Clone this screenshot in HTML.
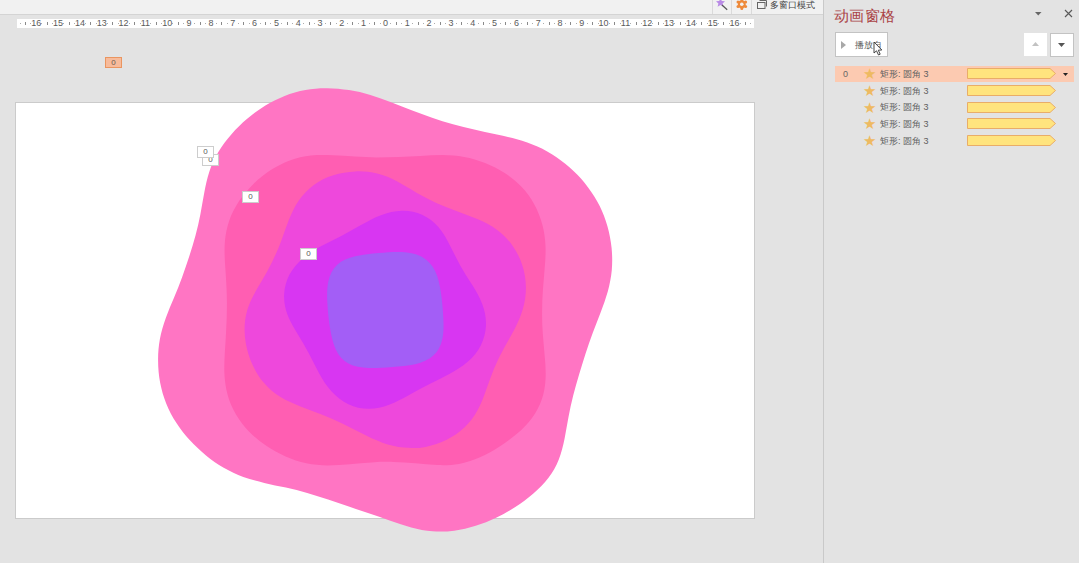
<!DOCTYPE html>
<html><head><meta charset="utf-8">
<style>
*{margin:0;padding:0;box-sizing:border-box}
html,body{width:1079px;height:563px;overflow:hidden;background:#e3e3e3;font-family:"Liberation Sans",sans-serif;position:relative}
.abs{position:absolute}
#topbar{left:0;top:0;width:823px;height:15px;background:#f1f1f1;border-bottom:1px solid #d4d4d4}
.sep{position:absolute;top:0;width:1px;height:14px;background:#dadada}
#ruler{left:17px;top:19px;width:737px;height:9px;background:#fff}
.rn{position:absolute;top:-1px;font-size:9px;line-height:11px;color:#5a5a5a;transform:translateX(-50%)}
.tk{position:absolute;background:#8a8a8a}
#slide{left:15px;top:102px;width:740px;height:417px;background:#fff;border:1px solid #cbcbcb}
.lbl{position:absolute;width:17px;height:12px;background:#fff;border:1px solid #cdcdcd;font-size:8px;line-height:10px;text-align:center;color:#5a5a5a}
#panelsep{left:823px;top:0;width:1px;height:563px;background:#c9c9c9}
#title{left:834px;top:6px;font-size:15px;line-height:20px;color:#aa4245;letter-spacing:0.4px}
.btn{position:absolute;background:#fff;border:1px solid #c3c3c3}
.row{position:absolute;left:835px;width:239px;height:16px}
.rtxt{position:absolute;left:45px;top:0.8px;font-size:9px;line-height:14px;color:#606060}
.star{position:absolute;left:28px;top:0px;font-size:15px;line-height:16px;color:#eeba62}
.bar{position:absolute;left:132px;top:2px;width:89px;height:11px}
</style></head><body>
<div id="topbar" class="abs">
  <div class="sep" style="left:712px"></div>
  <div class="sep" style="left:731px"></div>
  <div class="sep" style="left:751px"></div>
  <svg class="abs" style="left:712px;top:0" width="20" height="14" viewBox="0 0 20 14">
    <polygon points="8.5,-2.5 9.8,1 13,1.2 10.6,3.4 11.4,6.8 8.5,5 5.6,6.8 6.4,3.4 4,1.2 7.2,1" fill="#b98be6"/>
    <line x1="10" y1="5" x2="15.2" y2="9.8" stroke="#555" stroke-width="1.2"/>
  </svg>
  <svg class="abs" style="left:732px;top:0" width="19" height="14" viewBox="0 0 19 14">
    <g fill="#ee8a3a"><circle cx="9.8" cy="4.2" r="3.9"/><circle cx="9.8" cy="-0.2" r="1.5"/><circle cx="9.8" cy="8.6" r="1.5"/><circle cx="6" cy="2" r="1.5"/><circle cx="13.6" cy="2" r="1.5"/><circle cx="6" cy="6.4" r="1.5"/><circle cx="13.6" cy="6.4" r="1.5"/></g>
    <circle cx="9.8" cy="4.2" r="1.8" fill="#f1f1f1"/>
  </svg>
  <svg class="abs" style="left:756px;top:0" width="12" height="12" viewBox="0 0 12 12">
    <rect x="1.5" y="2.5" width="7.5" height="6" fill="#f1f1f1" stroke="#666" stroke-width="1"/>
    <path d="M3.5,0.5 H10.5 V6.5" fill="none" stroke="#666" stroke-width="1"/>
  </svg>
  <div class="abs" style="left:770px;top:0px;font-size:8.8px;line-height:11px;color:#444">多窗口模式</div>
</div>
<div id="ruler" class="abs"><div class="rn" style="left:19.3px">16</div><div class="rn" style="left:41.1px">15</div><div class="rn" style="left:63.0px">14</div><div class="rn" style="left:84.8px">13</div><div class="rn" style="left:106.6px">12</div><div class="rn" style="left:128.4px">11</div><div class="rn" style="left:150.2px">10</div><div class="rn" style="left:172.1px">9</div><div class="rn" style="left:193.9px">8</div><div class="rn" style="left:215.7px">7</div><div class="rn" style="left:237.5px">6</div><div class="rn" style="left:259.4px">5</div><div class="rn" style="left:281.2px">4</div><div class="rn" style="left:303.0px">3</div><div class="rn" style="left:324.8px">2</div><div class="rn" style="left:346.6px">1</div><div class="rn" style="left:368.4px">0</div><div class="rn" style="left:390.3px">1</div><div class="rn" style="left:412.1px">2</div><div class="rn" style="left:433.9px">3</div><div class="rn" style="left:455.7px">4</div><div class="rn" style="left:477.5px">5</div><div class="rn" style="left:499.4px">6</div><div class="rn" style="left:521.2px">7</div><div class="rn" style="left:543.0px">8</div><div class="rn" style="left:564.8px">9</div><div class="rn" style="left:586.6px">10</div><div class="rn" style="left:608.5px">11</div><div class="rn" style="left:630.3px">12</div><div class="rn" style="left:652.1px">13</div><div class="rn" style="left:673.9px">14</div><div class="rn" style="left:695.8px">15</div><div class="rn" style="left:717.6px">16</div><div class="tk" style="left:2.5px;top:4px;width:1px;height:1px;opacity:.7"></div><div class="tk" style="left:7.9px;top:3px;width:1px;height:3px"></div><div class="tk" style="left:13.4px;top:4px;width:1px;height:1px;opacity:.7"></div><div class="tk" style="left:24.3px;top:4px;width:1px;height:1px;opacity:.7"></div><div class="tk" style="left:29.7px;top:3px;width:1px;height:3px"></div><div class="tk" style="left:35.2px;top:4px;width:1px;height:1px;opacity:.7"></div><div class="tk" style="left:46.1px;top:4px;width:1px;height:1px;opacity:.7"></div><div class="tk" style="left:51.6px;top:3px;width:1px;height:3px"></div><div class="tk" style="left:57.0px;top:4px;width:1px;height:1px;opacity:.7"></div><div class="tk" style="left:67.9px;top:4px;width:1px;height:1px;opacity:.7"></div><div class="tk" style="left:73.4px;top:3px;width:1px;height:3px"></div><div class="tk" style="left:78.8px;top:4px;width:1px;height:1px;opacity:.7"></div><div class="tk" style="left:89.7px;top:4px;width:1px;height:1px;opacity:.7"></div><div class="tk" style="left:95.2px;top:3px;width:1px;height:3px"></div><div class="tk" style="left:100.7px;top:4px;width:1px;height:1px;opacity:.7"></div><div class="tk" style="left:111.6px;top:4px;width:1px;height:1px;opacity:.7"></div><div class="tk" style="left:117.0px;top:3px;width:1px;height:3px"></div><div class="tk" style="left:122.5px;top:4px;width:1px;height:1px;opacity:.7"></div><div class="tk" style="left:133.4px;top:4px;width:1px;height:1px;opacity:.7"></div><div class="tk" style="left:138.8px;top:3px;width:1px;height:3px"></div><div class="tk" style="left:144.3px;top:4px;width:1px;height:1px;opacity:.7"></div><div class="tk" style="left:155.2px;top:4px;width:1px;height:1px;opacity:.7"></div><div class="tk" style="left:160.7px;top:3px;width:1px;height:3px"></div><div class="tk" style="left:166.1px;top:4px;width:1px;height:1px;opacity:.7"></div><div class="tk" style="left:177.0px;top:4px;width:1px;height:1px;opacity:.7"></div><div class="tk" style="left:182.5px;top:3px;width:1px;height:3px"></div><div class="tk" style="left:187.9px;top:4px;width:1px;height:1px;opacity:.7"></div><div class="tk" style="left:198.8px;top:4px;width:1px;height:1px;opacity:.7"></div><div class="tk" style="left:204.3px;top:3px;width:1px;height:3px"></div><div class="tk" style="left:209.8px;top:4px;width:1px;height:1px;opacity:.7"></div><div class="tk" style="left:220.7px;top:4px;width:1px;height:1px;opacity:.7"></div><div class="tk" style="left:226.1px;top:3px;width:1px;height:3px"></div><div class="tk" style="left:231.6px;top:4px;width:1px;height:1px;opacity:.7"></div><div class="tk" style="left:242.5px;top:4px;width:1px;height:1px;opacity:.7"></div><div class="tk" style="left:247.9px;top:3px;width:1px;height:3px"></div><div class="tk" style="left:253.4px;top:4px;width:1px;height:1px;opacity:.7"></div><div class="tk" style="left:264.3px;top:4px;width:1px;height:1px;opacity:.7"></div><div class="tk" style="left:269.8px;top:3px;width:1px;height:3px"></div><div class="tk" style="left:275.2px;top:4px;width:1px;height:1px;opacity:.7"></div><div class="tk" style="left:286.1px;top:4px;width:1px;height:1px;opacity:.7"></div><div class="tk" style="left:291.6px;top:3px;width:1px;height:3px"></div><div class="tk" style="left:297.0px;top:4px;width:1px;height:1px;opacity:.7"></div><div class="tk" style="left:307.9px;top:4px;width:1px;height:1px;opacity:.7"></div><div class="tk" style="left:313.4px;top:3px;width:1px;height:3px"></div><div class="tk" style="left:318.9px;top:4px;width:1px;height:1px;opacity:.7"></div><div class="tk" style="left:329.8px;top:4px;width:1px;height:1px;opacity:.7"></div><div class="tk" style="left:335.2px;top:3px;width:1px;height:3px"></div><div class="tk" style="left:340.7px;top:4px;width:1px;height:1px;opacity:.7"></div><div class="tk" style="left:351.6px;top:4px;width:1px;height:1px;opacity:.7"></div><div class="tk" style="left:357.0px;top:3px;width:1px;height:3px"></div><div class="tk" style="left:362.5px;top:4px;width:1px;height:1px;opacity:.7"></div><div class="tk" style="left:373.4px;top:4px;width:1px;height:1px;opacity:.7"></div><div class="tk" style="left:378.9px;top:3px;width:1px;height:3px"></div><div class="tk" style="left:384.3px;top:4px;width:1px;height:1px;opacity:.7"></div><div class="tk" style="left:395.2px;top:4px;width:1px;height:1px;opacity:.7"></div><div class="tk" style="left:400.7px;top:3px;width:1px;height:3px"></div><div class="tk" style="left:406.1px;top:4px;width:1px;height:1px;opacity:.7"></div><div class="tk" style="left:417.0px;top:4px;width:1px;height:1px;opacity:.7"></div><div class="tk" style="left:422.5px;top:3px;width:1px;height:3px"></div><div class="tk" style="left:428.0px;top:4px;width:1px;height:1px;opacity:.7"></div><div class="tk" style="left:438.9px;top:4px;width:1px;height:1px;opacity:.7"></div><div class="tk" style="left:444.3px;top:3px;width:1px;height:3px"></div><div class="tk" style="left:449.8px;top:4px;width:1px;height:1px;opacity:.7"></div><div class="tk" style="left:460.7px;top:4px;width:1px;height:1px;opacity:.7"></div><div class="tk" style="left:466.1px;top:3px;width:1px;height:3px"></div><div class="tk" style="left:471.6px;top:4px;width:1px;height:1px;opacity:.7"></div><div class="tk" style="left:482.5px;top:4px;width:1px;height:1px;opacity:.7"></div><div class="tk" style="left:488.0px;top:3px;width:1px;height:3px"></div><div class="tk" style="left:493.4px;top:4px;width:1px;height:1px;opacity:.7"></div><div class="tk" style="left:504.3px;top:4px;width:1px;height:1px;opacity:.7"></div><div class="tk" style="left:509.8px;top:3px;width:1px;height:3px"></div><div class="tk" style="left:515.2px;top:4px;width:1px;height:1px;opacity:.7"></div><div class="tk" style="left:526.1px;top:4px;width:1px;height:1px;opacity:.7"></div><div class="tk" style="left:531.6px;top:3px;width:1px;height:3px"></div><div class="tk" style="left:537.1px;top:4px;width:1px;height:1px;opacity:.7"></div><div class="tk" style="left:548.0px;top:4px;width:1px;height:1px;opacity:.7"></div><div class="tk" style="left:553.4px;top:3px;width:1px;height:3px"></div><div class="tk" style="left:558.9px;top:4px;width:1px;height:1px;opacity:.7"></div><div class="tk" style="left:569.8px;top:4px;width:1px;height:1px;opacity:.7"></div><div class="tk" style="left:575.2px;top:3px;width:1px;height:3px"></div><div class="tk" style="left:580.7px;top:4px;width:1px;height:1px;opacity:.7"></div><div class="tk" style="left:591.6px;top:4px;width:1px;height:1px;opacity:.7"></div><div class="tk" style="left:597.1px;top:3px;width:1px;height:3px"></div><div class="tk" style="left:602.5px;top:4px;width:1px;height:1px;opacity:.7"></div><div class="tk" style="left:613.4px;top:4px;width:1px;height:1px;opacity:.7"></div><div class="tk" style="left:618.9px;top:3px;width:1px;height:3px"></div><div class="tk" style="left:624.3px;top:4px;width:1px;height:1px;opacity:.7"></div><div class="tk" style="left:635.2px;top:4px;width:1px;height:1px;opacity:.7"></div><div class="tk" style="left:640.7px;top:3px;width:1px;height:3px"></div><div class="tk" style="left:646.2px;top:4px;width:1px;height:1px;opacity:.7"></div><div class="tk" style="left:657.1px;top:4px;width:1px;height:1px;opacity:.7"></div><div class="tk" style="left:662.5px;top:3px;width:1px;height:3px"></div><div class="tk" style="left:668.0px;top:4px;width:1px;height:1px;opacity:.7"></div><div class="tk" style="left:678.9px;top:4px;width:1px;height:1px;opacity:.7"></div><div class="tk" style="left:684.3px;top:3px;width:1px;height:3px"></div><div class="tk" style="left:689.8px;top:4px;width:1px;height:1px;opacity:.7"></div><div class="tk" style="left:700.7px;top:4px;width:1px;height:1px;opacity:.7"></div><div class="tk" style="left:706.2px;top:3px;width:1px;height:3px"></div><div class="tk" style="left:711.6px;top:4px;width:1px;height:1px;opacity:.7"></div><div class="tk" style="left:722.5px;top:4px;width:1px;height:1px;opacity:.7"></div><div class="tk" style="left:728.0px;top:3px;width:1px;height:3px"></div><div class="tk" style="left:733.4px;top:4px;width:1px;height:1px;opacity:.7"></div></div>
<div class="abs" style="left:105px;top:57px;width:17px;height:11px;background:#f7bb9b;border:1px solid #ea9560;font-size:8px;line-height:9px;text-align:center;color:#6a5a50">0</div>
<div id="slide" class="abs"></div>
<svg class="abs" style="left:0;top:0" width="1079" height="563">
  <path d="M174.1,297.6C176.9,290.8 179.6,284.0 182.1,277.2C184.6,270.3 187.0,263.4 189.2,256.5C191.5,249.6 193.6,242.6 195.5,235.6C197.4,228.5 199.0,221.4 200.4,214.3C201.8,207.1 202.9,199.8 204.3,192.6C205.6,185.4 207.1,178.2 209.4,171.4C211.7,164.5 214.7,157.9 218.5,151.7C222.2,145.5 226.6,139.7 231.5,134.2C236.3,128.7 241.6,123.5 247.2,118.8C252.8,114.0 258.7,109.7 265.0,105.8C271.2,101.9 277.8,98.6 284.6,95.9C291.3,93.2 298.3,91.2 305.5,89.9C312.6,88.7 319.9,88.1 327.1,88.2C334.4,88.3 341.8,89.0 349.0,90.1C356.3,91.3 363.4,92.9 370.4,95.0C377.4,97.1 384.3,99.7 391.1,102.3C397.9,104.9 404.7,107.5 411.6,110.2C418.4,112.8 425.2,115.3 432.1,117.7C439.0,120.1 445.9,122.2 453.0,124.2C460.0,126.2 467.1,127.9 474.2,129.6C481.3,131.3 488.5,132.8 495.7,134.3C502.8,135.8 510.0,137.2 516.9,139.2C523.9,141.1 530.8,143.6 537.4,146.6C544.1,149.6 550.5,153.2 556.5,157.3C562.5,161.4 568.2,166.0 573.5,171.1C578.8,176.1 583.8,181.6 588.1,187.5C592.5,193.4 596.4,199.6 599.7,206.1C602.9,212.7 605.5,219.5 607.5,226.5C609.5,233.6 610.8,240.8 611.6,248.0C612.3,255.3 612.4,262.7 611.8,269.9C611.1,277.2 609.7,284.4 607.8,291.4C605.8,298.5 603.3,305.4 600.7,312.2C598.1,319.1 595.4,325.9 592.8,332.7C590.3,339.6 587.9,346.4 585.6,353.4C583.4,360.3 581.2,367.3 579.1,374.4C577.0,381.4 575.0,388.4 573.2,395.5C571.4,402.6 569.8,409.7 568.5,416.9C567.1,424.1 566.0,431.3 564.6,438.4C563.1,445.6 561.4,452.7 558.8,459.4C556.2,466.0 552.6,472.3 548.3,478.0C543.9,483.7 538.7,488.9 533.1,493.8C527.5,498.6 521.5,503.0 515.3,507.0C509.1,511.0 502.7,514.6 496.1,517.7C489.5,520.9 482.6,523.6 475.7,525.8C468.7,528.1 461.5,529.8 454.3,530.7C447.1,531.6 439.8,531.8 432.6,531.3C425.4,530.7 418.2,529.4 411.2,527.5C404.2,525.6 397.3,523.2 390.3,520.8C383.4,518.4 376.5,516.0 369.5,513.6C362.6,511.3 355.7,509.0 348.8,506.6C341.9,504.3 335.0,501.9 328.1,499.6C321.2,497.3 314.2,495.0 307.2,493.0C300.2,491.0 293.1,489.3 285.9,487.6C278.7,486.0 271.5,484.6 264.3,482.9C257.2,481.2 250.1,479.3 243.3,476.9C236.5,474.4 230.0,471.3 223.7,467.7C217.4,464.1 211.4,459.9 205.7,455.2C200.0,450.6 194.7,445.5 189.7,440.1C184.8,434.6 180.2,428.9 176.3,422.8C172.3,416.7 168.9,410.3 166.2,403.5C163.5,396.8 161.5,389.8 160.1,382.6C158.8,375.4 158.1,368.0 158.1,360.7C158.0,353.3 158.6,346.0 159.9,338.9C161.2,331.8 163.3,324.8 165.8,317.9C168.3,311.1 171.3,304.3 174.1,297.6Z" fill="#ff75c3"/>
  <path d="M226.4,285.4C226.1,278.1 225.5,270.7 225.0,263.4C224.6,256.0 224.3,248.7 224.9,241.5C225.5,234.3 226.9,227.2 229.3,220.4C231.7,213.6 235.1,207.2 239.1,201.1C243.2,195.1 248.0,189.4 253.2,184.2C258.5,179.1 264.2,174.4 270.4,170.3C276.5,166.3 283.0,162.9 289.8,160.4C296.6,157.9 303.7,156.3 310.9,155.5C318.1,154.8 325.4,154.9 332.7,155.2C340.0,155.5 347.4,156.1 354.7,156.6C362.0,157.0 369.3,157.3 376.6,157.4C383.9,157.4 391.2,157.3 398.5,157.1C405.9,156.8 413.2,156.4 420.5,156.0C427.8,155.5 435.1,155.1 442.4,155.1C449.7,155.2 457.0,155.7 464.1,156.9C471.3,158.2 478.3,160.3 485.1,163.0C491.9,165.7 498.6,169.1 504.7,173.0C510.9,177.0 516.6,181.5 521.5,186.8C526.5,192.0 530.8,197.9 534.2,204.3C537.7,210.7 540.4,217.5 542.3,224.6C544.2,231.6 545.2,238.9 545.5,246.2C545.8,253.5 545.3,260.8 544.7,268.1C544.2,275.5 543.4,282.8 542.9,290.1C542.4,297.3 542.1,304.6 542.1,311.9C542.0,319.2 542.3,326.5 542.8,333.8C543.3,341.2 544.1,348.5 544.7,355.9C545.4,363.3 545.9,370.7 545.6,377.9C545.3,385.2 544.2,392.3 541.9,399.0C539.7,405.7 536.3,412.0 532.0,417.9C527.7,423.7 522.6,429.0 516.9,433.8C511.3,438.6 505.2,442.9 498.9,446.9C492.6,450.9 486.1,454.5 479.4,457.5C472.8,460.4 465.9,462.7 458.9,463.9C451.9,465.2 444.7,465.4 437.4,465.1C430.1,464.8 422.7,463.9 415.4,463.2C408.0,462.6 400.7,462.1 393.4,461.9C386.1,461.8 378.8,461.9 371.6,462.4C364.3,462.8 357.0,463.6 349.7,464.2C342.4,464.8 335.1,465.4 327.8,465.4C320.5,465.3 313.3,464.7 306.3,463.2C299.2,461.7 292.3,459.4 285.6,456.4C278.9,453.4 272.4,449.8 266.3,445.7C260.1,441.6 254.4,436.9 249.2,431.7C244.1,426.5 239.7,420.7 236.0,414.5C232.4,408.3 229.5,401.6 227.6,394.7C225.7,387.8 224.7,380.6 224.4,373.3C224.1,366.0 224.5,358.7 224.9,351.3C225.4,343.9 225.9,336.6 226.2,329.3C226.6,321.9 226.9,314.6 226.9,307.3C227.0,300.0 226.8,292.7 226.4,285.4Z" fill="#ff5eb2"/>
  <path d="M250.9,300.6C253.8,294.0 257.7,287.7 261.5,281.3C265.3,274.9 268.9,268.4 272.2,261.7C275.5,255.0 278.5,248.2 281.1,241.2C283.7,234.2 286.1,227.1 288.8,220.1C291.6,213.2 294.7,206.6 298.8,200.6C302.9,194.6 307.9,189.3 313.8,185.0C319.6,180.7 326.2,177.4 333.3,175.2C340.3,172.9 347.8,171.7 355.3,171.4C362.7,171.1 370.1,171.7 377.2,173.5C384.2,175.2 390.9,178.1 397.3,181.5C403.8,184.9 410.1,189.0 416.5,192.7C422.9,196.4 429.5,199.9 436.3,203.0C443.1,206.0 450.0,208.7 457.0,211.3C464.1,213.9 471.1,216.4 477.9,219.3C484.8,222.2 491.3,225.6 497.2,229.9C503.0,234.2 508.2,239.4 512.4,245.4C516.7,251.4 520.0,258.1 522.3,265.2C524.6,272.2 525.8,279.6 525.9,287.0C526.0,294.3 525.0,301.6 523.0,308.6C521.0,315.7 518.0,322.4 514.6,329.0C511.2,335.6 507.3,342.1 503.8,348.6C500.2,355.2 496.9,361.9 494.0,368.8C491.2,375.7 488.7,382.8 486.2,389.8C483.7,396.8 481.1,403.8 477.7,410.1C474.2,416.5 469.9,422.3 464.7,427.3C459.4,432.3 453.3,436.5 446.7,439.8C440.1,443.1 433.0,445.5 425.7,446.9C418.5,448.2 411.1,448.4 403.8,447.6C396.6,446.9 389.4,445.1 382.4,442.7C375.5,440.2 368.8,437.0 362.1,433.6C355.5,430.3 348.9,426.8 342.2,423.5C335.4,420.2 328.5,417.3 321.6,414.5C314.6,411.8 307.4,409.3 300.5,406.5C293.5,403.8 286.7,400.9 280.5,397.1C274.3,393.3 268.8,388.6 264.1,383.1C259.4,377.6 255.4,371.3 252.4,364.5C249.3,357.8 247.1,350.5 245.8,343.2C244.5,335.8 244.2,328.4 245.0,321.2C245.9,314.1 247.9,307.2 250.9,300.6Z" fill="#ee48dc"/>
  <path d="M284.1,294.6C284.4,287.7 286.3,280.8 289.5,274.6C292.8,268.4 297.4,262.9 303.0,258.2C308.5,253.5 314.9,249.7 321.4,246.1C328.0,242.6 334.7,239.3 341.3,235.9C347.9,232.4 354.4,228.7 361.0,225.1C367.5,221.4 374.1,217.8 380.9,215.2C387.7,212.5 394.8,210.9 401.8,210.7C408.9,210.5 415.9,211.9 422.1,214.7C428.4,217.6 434.0,221.9 438.6,227.3C443.2,232.8 446.8,239.2 450.2,245.9C453.6,252.5 456.9,259.4 460.5,265.9C464.2,272.5 468.3,278.7 472.3,285.1C476.2,291.4 480.0,297.8 482.4,304.5C484.9,311.3 486.2,318.3 486.0,325.3C485.7,332.3 484.0,339.2 480.8,345.4C477.7,351.6 473.1,357.1 467.7,361.8C462.2,366.5 455.9,370.4 449.3,374.0C442.7,377.6 435.9,380.8 429.1,384.2C422.4,387.7 415.7,391.3 409.1,394.9C402.5,398.5 395.8,402.1 389.1,404.7C382.3,407.3 375.3,408.9 368.4,408.8C361.5,408.8 354.7,407.2 348.4,404.2C342.2,401.2 336.5,396.7 331.6,391.4C326.7,386.1 322.7,379.9 319.2,373.4C315.6,366.8 312.4,360.0 308.9,353.5C305.4,346.9 301.6,340.5 297.8,334.2C294.0,327.9 290.2,321.7 287.6,315.1C285.1,308.5 283.8,301.5 284.1,294.6Z" fill="#d836f2"/>
  <path d="M327.4,304.0C326.9,296.0 326.9,288.3 328.3,281.5C329.7,274.7 332.6,268.9 337.2,264.7C341.8,260.6 348.1,258.0 355.2,256.3C362.4,254.7 370.4,253.9 378.5,253.1C386.5,252.4 394.6,251.7 402.1,252.1C409.6,252.5 416.5,254.0 422.2,257.1C427.8,260.3 432.2,265.1 435.2,271.3C438.2,277.4 439.7,284.7 440.9,292.5C442.0,300.2 442.8,308.4 443.2,316.3C443.7,324.2 443.8,331.9 442.4,338.7C441.0,345.5 438.0,351.3 433.3,355.6C428.7,359.9 422.4,362.5 415.2,364.2C408.1,365.8 400.1,366.4 392.1,367.0C384.0,367.6 375.9,368.3 368.4,368.0C361.0,367.7 354.1,366.5 348.5,363.5C342.9,360.5 338.7,355.7 335.8,349.5C332.9,343.3 331.3,335.9 330.0,328.1C328.7,320.2 327.9,312.0 327.4,304.0Z" fill="#a35ef6"/>
</svg>
<div class="lbl" style="left:202px;top:154px">0</div>
<div class="lbl" style="left:197px;top:146px">0</div>
<div class="lbl" style="left:242px;top:191px">0</div>
<div class="lbl" style="left:300px;top:248px">0</div>
<div id="panelsep" class="abs"></div>
<div id="title" class="abs">动画窗格</div>
<svg class="abs" style="left:1034.5px;top:11.5px" width="8" height="5"><polygon points="0,0 6.5,0 3.25,3.5" fill="#666"/></svg>
<svg class="abs" style="left:1064px;top:9px" width="9" height="9"><path d="M1,1 L8,8 M8,1 L1,8" stroke="#5a5a5a" stroke-width="1.15"/></svg>
<div class="btn" style="left:835px;top:32px;width:53px;height:25px">
  <svg class="abs" style="left:5px;top:8px" width="6" height="9"><polygon points="0,0 5,4 0,8" fill="#a8a8a8"/></svg>
  <div class="abs" style="left:19px;top:5px;font-size:9px;line-height:14px;color:#606060;font-weight:300">播放自</div>
  <svg class="abs" style="left:37px;top:8px" width="12" height="16" viewBox="0 0 12 16"><path d="M1,1 L1,12 L3.5,9.8 L5.5,14 L7.2,13.2 L5.3,9.2 L8.8,9 Z" fill="#fff" stroke="#333" stroke-width="0.9"/></svg>
</div>
<div class="btn" style="left:1024px;top:33px;width:23px;height:23px;border-color:#fff">
  <svg class="abs" style="left:7px;top:8px" width="8" height="5"><polygon points="0,4 7,4 3.5,0" fill="#c2c2c2"/></svg>
</div>
<div class="btn" style="left:1050px;top:33px;width:24px;height:24px">
  <svg class="abs" style="left:7px;top:9px" width="8" height="5"><polygon points="0,0 7,0 3.5,4" fill="#555"/></svg>
</div>
<div class="row" style="top:66.0px;background:#fccab1"><div class="abs" style="left:8px;top:2px;font-size:9px;line-height:12px;color:#666">0</div><div class="star">★</div><div class="rtxt">矩形: 圆角 3</div><svg class="bar" viewBox="0 0 89 11"><polygon points="0.5,0.5 83,0.5 88.5,5.5 83,10.5 0.5,10.5" fill="#ffe47e" stroke="#e9ad68" stroke-width="1"/></svg><svg class="abs" style="left:228px;top:7px" width="6" height="4"><polygon points="0,0 5,0 2.5,3" fill="#222"/></svg></div><div class="row" style="top:82.8px;"><div class="star">★</div><div class="rtxt">矩形: 圆角 3</div><svg class="bar" viewBox="0 0 89 11"><polygon points="0.5,0.5 83,0.5 88.5,5.5 83,10.5 0.5,10.5" fill="#ffe47e" stroke="#e9ad68" stroke-width="1"/></svg></div><div class="row" style="top:99.6px;"><div class="star">★</div><div class="rtxt">矩形: 圆角 3</div><svg class="bar" viewBox="0 0 89 11"><polygon points="0.5,0.5 83,0.5 88.5,5.5 83,10.5 0.5,10.5" fill="#ffe47e" stroke="#e9ad68" stroke-width="1"/></svg></div><div class="row" style="top:116.4px;"><div class="star">★</div><div class="rtxt">矩形: 圆角 3</div><svg class="bar" viewBox="0 0 89 11"><polygon points="0.5,0.5 83,0.5 88.5,5.5 83,10.5 0.5,10.5" fill="#ffe47e" stroke="#e9ad68" stroke-width="1"/></svg></div><div class="row" style="top:133.2px;"><div class="star">★</div><div class="rtxt">矩形: 圆角 3</div><svg class="bar" viewBox="0 0 89 11"><polygon points="0.5,0.5 83,0.5 88.5,5.5 83,10.5 0.5,10.5" fill="#ffe47e" stroke="#e9ad68" stroke-width="1"/></svg></div>
</body></html>
